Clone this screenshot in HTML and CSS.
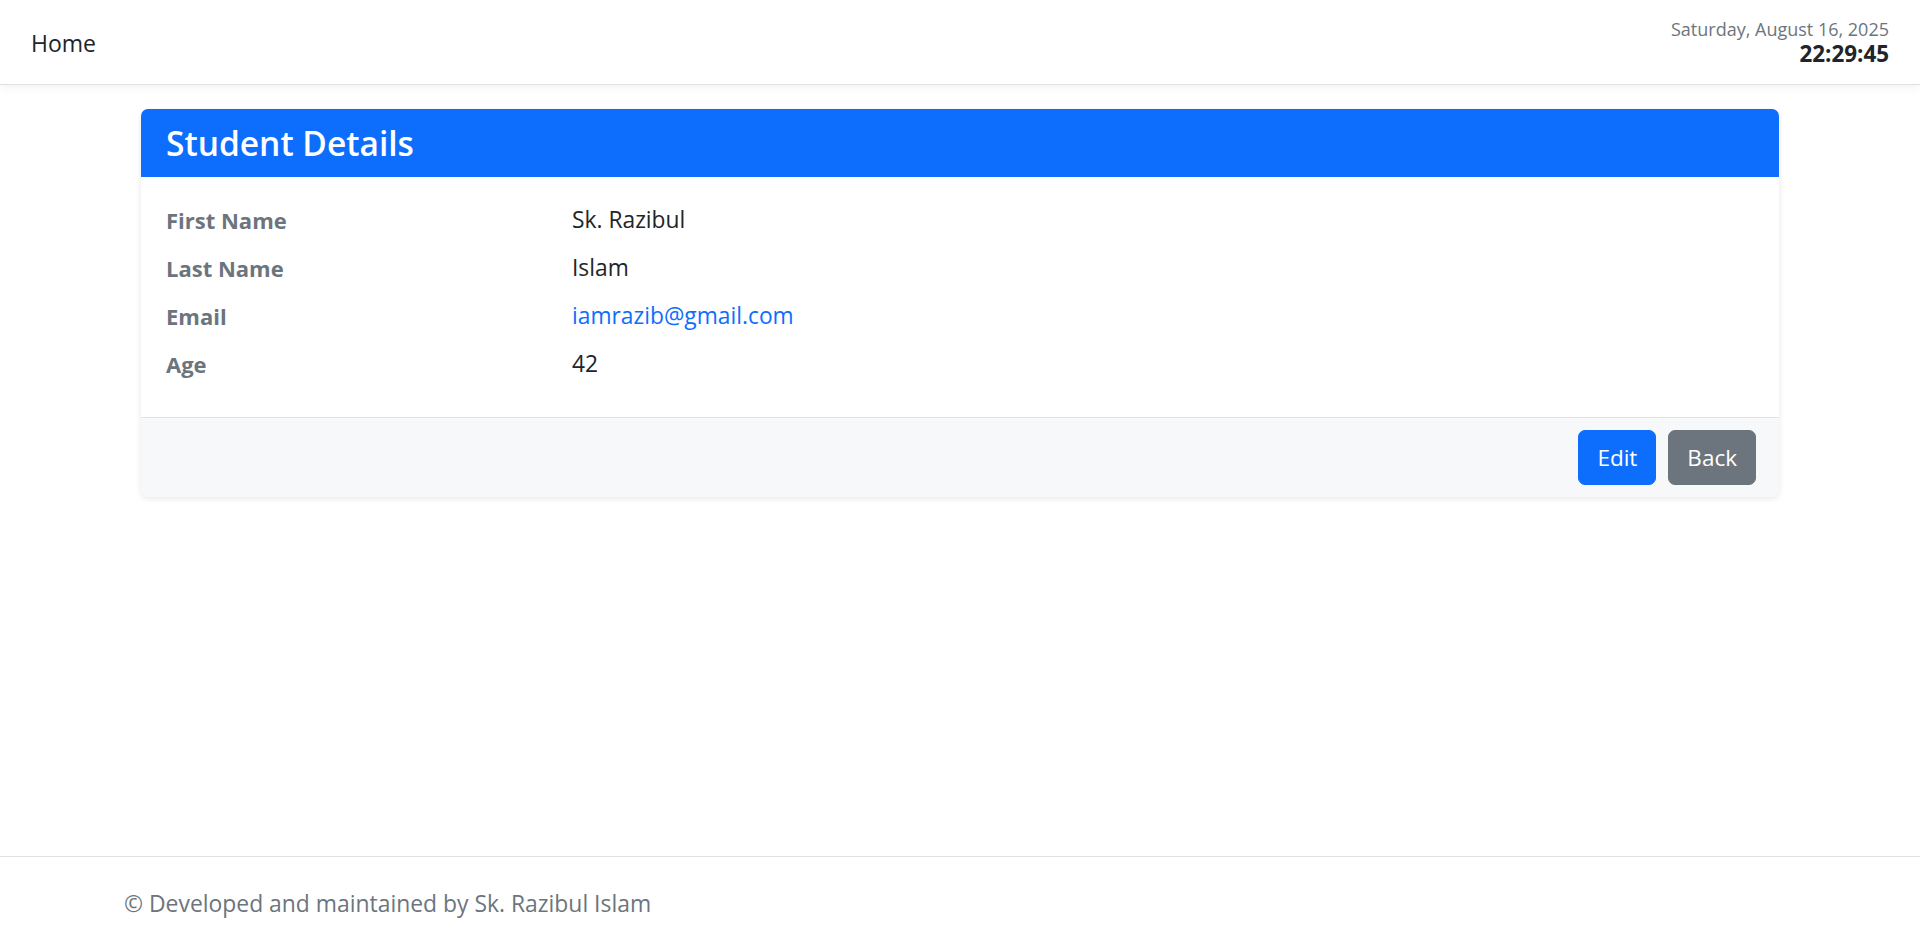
FILE: index.html
```html
<!DOCTYPE html>
<html lang="en">
<head>
<meta charset="utf-8">
<title>Student Details</title>
<link rel="stylesheet" href="styles.css">
</head>
<body>
<div class="page">
  <nav class="navbar">
    <a class="brand" href="#">Home</a>
    <div class="clock">
      <div class="date">Saturday, August 16, 2025</div>
      <div class="time">22:29:45</div>
    </div>
  </nav>

  <main class="main">
    <section class="card">
      <header class="card-header">
        <h3 class="card-title">Student Details</h3>
      </header>
      <div class="card-body">
        <dl class="details">
          <dt>First Name</dt>
          <dd>Sk. Razibul</dd>
          <dt>Last Name</dt>
          <dd>Islam</dd>
          <dt>Email</dt>
          <dd><a class="link" href="#">iamrazib@gmail.com</a></dd>
          <dt>Age</dt>
          <dd>42</dd>
        </dl>
      </div>
      <footer class="card-footer">
        <a class="btn btn-primary" href="#">Edit</a>
        <a class="btn btn-secondary" href="#">Back</a>
      </footer>
    </section>
  </main>

  <footer class="site-footer">
    <span>© Developed and maintained by Sk. Razibul Islam</span>
  </footer>
</div>
</body>
</html>
```

FILE: styles.css
```css
* { box-sizing: border-box; }
html, body { margin: 0; padding: 0; height: 100%; }
body {
  font-family: "Open Sans", "Noto Sans", "Liberation Sans", sans-serif;
  color: #212529;
  background: #fff;
}
.page {
  min-height: 946px;
  display: flex;
  flex-direction: column;
}
.navbar {
  height: 85px;
  display: flex;
  align-items: center;
  justify-content: space-between;
  padding: 0 31px;
  border-bottom: 1px solid #dee2e6;
  box-shadow: 0 2px 10px rgba(0,0,0,0.06);
  background: #fff;
  position: relative;
  z-index: 2;
}
.brand {
  color: #212529;
  text-decoration: none;
  font-size: 23px;
  line-height: 30px;
  padding-top: 2px;
}
.clock { text-align: right; }
.date {
  font-size: 18px;
  line-height: 22px;
  color: #6c757d;
}
.time {
  font-size: 22.4px;
  line-height: 27px;
  font-weight: 700;
  color: #212529;
}
.main {
  flex: 1;
  padding: 24px 0 0;
}
.card {
  width: 1638px;
  margin: 0 auto;
  border-radius: 7px;
  background: #fff;
  box-shadow: 0 2px 6px rgba(0,0,0,0.09);
  overflow: hidden;
}
.card-header {
  background: #0d6efd;
  color: #fff;
  height: 68px;
  display: flex;
  align-items: center;
  padding: 0 25px;
}
.card-title {
  margin: 0;
  font-size: 33.5px;
  font-weight: 600;
  line-height: 1;
  padding-top: 2px;
}
.card-body {
  padding: 28px 25px 38px;
}
.details {
  margin: 0;
  display: grid;
  grid-template-columns: 406px 1fr;
  row-gap: 18px;
  line-height: 30px;
}
.details dt {
  font-weight: 700;
  font-size: 22px;
  color: #6c757d;
}
.details dd {
  margin: 0;
  color: #212529;
  font-size: 22.8px;
}
.link { color: #0d6efd; text-decoration: none; }
.card-footer {
  background: #f7f8fa;
  border-top: 1px solid #dee2e6;
  padding: 12px 23px 12px;
  display: flex;
  justify-content: flex-end;
  gap: 12px;
}
.btn {
  display: inline-block;
  font-size: 22.5px;
  line-height: 35px;
  padding: 9px 18px;
  border: 1px solid transparent;
  border-radius: 7px;
  color: #fff;
  text-decoration: none;
}
.btn-primary { background: #0d6efd; border-color: #0d6efd; }
.btn-secondary { background: #6c757d; border-color: #6c757d; }
.site-footer {
  border-top: 1px solid #dee2e6;
  height: 90px;
  padding: 3px 0 0 124px;
  display: flex;
  align-items: center;
  color: #6c757d;
  font-size: 22.9px;
}
```
